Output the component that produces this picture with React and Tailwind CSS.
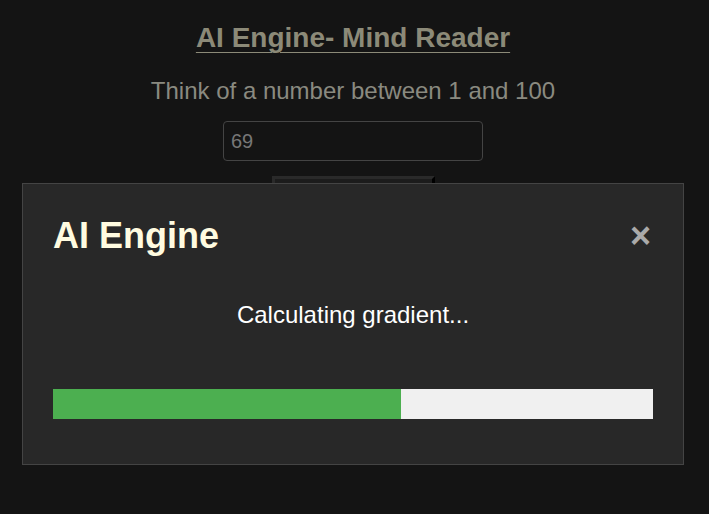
export default function App() {
  const progress = 58;

  return (
    <div className="relative w-[709px] h-[514px] overflow-hidden bg-[#141414] font-['Liberation_Sans',Arial,sans-serif]">
      <div className="w-[706px] flex flex-col items-center pt-[20px]">
        <h1 className="text-[28px] leading-[36px] font-bold text-[#8c8a78] underline underline-offset-[5px] decoration-1">
          AI Engine- Mind Reader
        </h1>
        <p className="mt-[20px] text-[24px] leading-[30px] text-[#8a8a80]">
          Think of a number between 1 and 100
        </p>
        <input
          readOnly
          value="69"
          className="mt-[15px] w-[260px] h-[40px] px-[7px] rounded-[4px] border border-[#444] bg-[#141414] text-[20px] text-[#777] outline-none"
        />
        <button className="mt-[15px] w-[163px] h-[38px] bg-[#1c1c1c] border-[3px] border-t-[#2a2a2a] border-l-[#2a2a2a] border-r-black border-b-black" />
      </div>

      <div className="absolute left-[22px] top-[183px] w-[662px] h-[282px] bg-[#282828] border border-[#444] px-[30px] pt-[30px]">
        <div className="flex items-center justify-between">
          <h2 className="text-[36px] leading-[44px] font-bold text-[#fffbe0]">AI Engine</h2>
          <span className="text-[36px] leading-[44px] font-bold text-[#aaa] mr-[2px]">×</span>
        </div>
        <p className="mt-[43px] text-center text-[24px] leading-[28px] text-white">Calculating gradient...</p>
        <div className="mt-[60px] h-[30px] w-[600px] bg-[#f0f0f0]">
          <div className="h-full bg-[#4caf50]" style={{ width: `${progress}%` }} />
        </div>
      </div>
    </div>
  );
}
